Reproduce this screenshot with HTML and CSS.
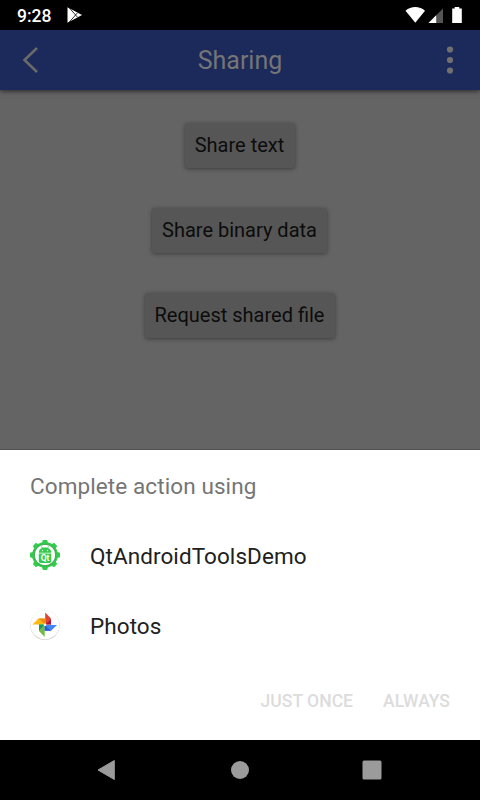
FILE: index.html
```
<!DOCTYPE html>
<html lang="en">
<head>
<meta charset="utf-8">
<title>Sharing</title>
<link rel="stylesheet" href="styles.css">
</head>
<body>
<div class="screen">
  <header class="status">
    <span class="clock">9:28</span>
    <svg class="play" width="16" height="18" viewBox="0 0 16 18"><path fill="#fff" d="M.5 1.200 15 9 .5 16.800z"/><path d="M1.500 1l9 10.200M1.500 17l9-10.200" stroke="#000" stroke-width=".8" fill="none"/></svg>
    <svg class="signals" width="58" height="18" viewBox="0 0 58 18"><path fill="#fff" d="M.5 4.700C6-.3 14.500-.3 20 4.700L10.300 16.700z"/><path fill="#555" d="M38 2.500V17H23.500z"/><path fill="#fff" d="M31.200 9.300V17H23.500z"/><path fill="#fff" d="M47.200 2.500h2.500V1h4.600v1.500h2.500V17h-9.600z"/></svg>
  </header>
  <nav class="toolbar">
    <svg width="20" height="30" viewBox="0 0 20 30"><path d="M17 3 4.500 15 17 27" fill="none" stroke="#6a6a6a" stroke-width="2.600"/></svg>
    <h1>Sharing</h1>
    <svg width="20" height="30" viewBox="0 0 20 30" fill="#707070"><circle cx="10" cy="4.500" r="3.100"/><circle cx="10" cy="15" r="3.100"/><circle cx="10" cy="25.500" r="3.100"/></svg>
  </nav>
  <main class="content">
    <button class="action text">Share text</button>
    <button class="action binary">Share binary data</button>
    <button class="action file">Request shared file</button>
  </main>
  <section class="sheet">
    <h2>Complete action using</h2>
    <div class="app">
      <svg width="32" height="32" viewBox="-16 -16 32 32">
        <g fill="#32cb4b"><circle r="12.900"/>
          <path id="tooth" d="M-2.200-15h4.400l1 4h-6.400z"/><use href="#tooth" transform="rotate(45)"/><use href="#tooth" transform="rotate(90)"/><use href="#tooth" transform="rotate(135)"/><use href="#tooth" transform="rotate(180)"/><use href="#tooth" transform="rotate(225)"/><use href="#tooth" transform="rotate(270)"/><use href="#tooth" transform="rotate(315)"/>
        </g>
        <circle r="10.700" fill="#fff" stroke="#278f3a" stroke-width=".8"/>
        <path fill="#32cb4b" d="M-6.200-2.200c0-2.300 1.300-3.900 3.200-4.700l-1-1.600.5-.3 1.200 1.600c1.400-.4 3.200-.4 4.600 0l1.200-1.600.5.300-1 1.600c1.900.8 3.200 2.400 3.200 4.700zM-6.200-1.500H6.200V6.300q0 1.700-1.700 1.700h-9Q-6.200 8-6.200 6.300z"/>
        <circle cx="-2.500" cy="-4.500" r=".7" fill="#fff"/><circle cx="2.500" cy="-4.500" r=".7" fill="#fff"/>
        <text class="badge" x="0" y="6" text-anchor="middle">Qt</text>
      </svg>
      <span>QtAndroidToolsDemo</span>
    </div>
    <div class="app">
      <svg width="32" height="32" viewBox="-16 -16 32 32">
        <circle cy=".3" r="14.700" fill="#cfcfcf"/><circle cy="-.2" r="14.600" fill="#f2f2f2"/><circle cy="-.2" r="14.200" fill="#fff"/>
        <path fill="#dc4437" d="M.2-12.500 6-6.500V-.500H.2z"/><path fill="#a61b4b" d="M.2-.500 6-5.500V-.500z"/>
        <path fill="#fbb916" d="M-12.500-.500-6.500-6.500H.2V-.500z"/><path fill="#f18a12" d="M.2-.500-6.500-6.500H.2z"/>
        <path fill="#72bb43" d="M-.300 12-6 6V-.500h5.700z"/><path fill="#16995a" d="M-.300-.500-6 5.500V-.500z"/>
        <path fill="#4285f4" d="M12 0 6 5.800H-.300V0z"/><path fill="#2b5fd0" d="M-.300 0 6 5.800H-.300z"/>
        <circle cy="-.3" r="1.300" fill="#fff"/>
      </svg>
      <span>Photos</span>
    </div>
    <div class="choices"><span>JUST ONCE</span><span>ALWAYS</span></div>
  </section>
  <footer class="navigation">
    <svg width="20" height="22" viewBox="0 0 20 22"><path fill="#9b9b9b" stroke="#9b9b9b" stroke-linejoin="round" d="M2 11 18.300 1.500v19z"/></svg>
    <svg width="20" height="22" viewBox="0 0 20 22"><circle cx="11" cy="11" r="9" fill="#9b9b9b"/></svg>
    <svg width="20" height="22" viewBox="0 0 20 22"><rect x=".5" y="1.500" width="19" height="19" rx="1.500" fill="#9b9b9b"/></svg>
  </footer>
</div>
</body>
</html>
```
FILE: styles.css
```
* { box-sizing: border-box; }
body { margin: 0; font-family: Roboto, sans-serif; background: #000; }
svg { display: block; flex: none; }
h1, h2 { margin: 0; font-weight: 400; }
.screen { width: 480px; height: 800px; display: flex; flex-direction: column; overflow: hidden; }
.status { height: 30px; flex: none; display: flex; align-items: center; padding: 0 17px; background: #000; color: #fff; }
.clock { font-size: 17.5px; font-weight: 500; line-height: 30px; width: 50px; padding-top: 2px; }
.signals { margin-left: auto; }
.toolbar { height: 60px; flex: none; display: flex; align-items: center; justify-content: space-between; padding: 0 20px; background: #1b2a5b; color: #757575; box-shadow: 0 1px 5px rgba(0,0,0,.65); z-index: 1; }
.toolbar h1 { font-size: 25px; line-height: 30px; padding-top: 1px; }
.content { height: 360px; flex: none; display: flex; flex-direction: column; align-items: center; gap: 40px; padding: 33px 1px 0 0; background: #646464; border-bottom: 1px solid #515151; }
.action { height: 45px; flex: none; padding: 0; border: 0; border-radius: 3px; background: #565656; color: #0c0c0c; font: 20px/45px Roboto, sans-serif; box-shadow: 0 1px 4px rgba(0,0,0,.4); }
.text { width: 110px; }
.binary { width: 175px; }
.file { width: 190px; }
.sheet { height: 290px; flex: none; background: #fff; padding: 20px 30px 0; }
.sheet h2 { font-size: 22.5px; line-height: 32px; height: 50px; color: #757575; letter-spacing: .1px; }
.app { height: 70px; display: flex; align-items: center; gap: 29px; margin-left: -1px; font-size: 22.5px; color: #212121; letter-spacing: .07px; }
.app span { padding-top: 2px; }
.badge { font: 700 8.5px Roboto, sans-serif; fill: #fff; letter-spacing: 0; }
.choices { height: 80px; display: flex; justify-content: flex-end; align-items: center; gap: 30px; padding-top: 2px; font-size: 17.5px; font-weight: 500; color: #dcdcdc; letter-spacing: .03px; }
.navigation { height: 60px; flex: none; display: flex; align-items: center; justify-content: space-between; padding: 0 98px 0 96px; background: #000; }
```
